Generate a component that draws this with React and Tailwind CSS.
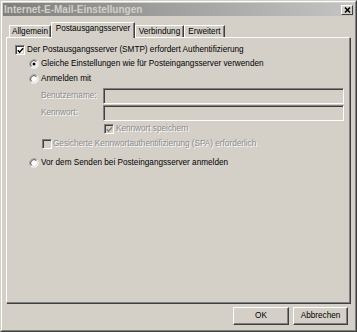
import React from "react";

const DIS = "text-[#8a8a8a] [text-shadow:1px_1px_0_#ffffff]";

function Check({ checked, disabled }) {
  return (
    <span
      className={`relative flex items-center justify-center w-[10px] h-[10px] shrink-0 border border-t-[#808080] border-l-[#808080] border-r-white border-b-white shadow-[inset_1px_1px_0_#404040,inset_-1px_-1px_0_#d4d0c8] ${
        disabled ? "bg-[#d4d0c8]" : "bg-white"
      }`}
    >
      {checked && (
        <svg width="7" height="7" viewBox="0 0 7 7">
          <path
            d="M0.8 3.2 L2.6 5.2 L6.2 1.2"
            fill="none"
            stroke={disabled ? "#808080" : "#000"}
            strokeWidth="1.5"
          />
        </svg>
      )}
    </span>
  );
}

function Radio({ checked }) {
  return (
    <svg width="10" height="10" viewBox="0 0 12 12" className="shrink-0">
      <circle cx="6" cy="6" r="5" fill="#fff" />
      <path d="M2.46 9.54 A5 5 0 0 1 9.54 2.46" fill="none" stroke="#808080" strokeWidth="1" />
      <path d="M9.54 2.46 A5 5 0 0 1 2.46 9.54" fill="none" stroke="#ffffff" strokeWidth="1" />
      <path d="M3.17 8.83 A4 4 0 0 1 8.83 3.17" fill="none" stroke="#404040" strokeWidth="1" />
      <path d="M8.83 3.17 A4 4 0 0 1 3.17 8.83" fill="none" stroke="#d4d0c8" strokeWidth="1" />
      {checked && <circle cx="6" cy="6" r="1.8" fill="#000" />}
    </svg>
  );
}

function Tab({ label, w, selected }) {
  if (selected) {
    return (
      <div
        className={`${w} h-[16px] mb-[-1px] relative z-10 bg-[#d4d0c8] border-l border-t border-l-white border-t-white border-r border-r-[#404040] shadow-[inset_-1px_0_0_#808080] flex justify-center leading-[12px] shrink-0`}
      >
        {label}
      </div>
    );
  }
  return (
    <div
      className={`${w} h-[12px] border-l border-t border-l-white border-t-white border-r border-r-[#404040] shadow-[inset_-1px_0_0_#808080] flex justify-center leading-[11px] shrink-0`}
    >
      {label}
    </div>
  );
}

function Field() {
  return (
    <div className="w-[241px] h-[16px] bg-[#d4d0c8] border border-t-[#808080] border-l-[#808080] border-r-white border-b-white shadow-[inset_1px_1px_0_#404040,inset_-1px_-1px_0_#d4d0c8]" />
  );
}

function Button({ children, w }) {
  return (
    <div
      className={`${w} h-[18px] flex items-center justify-center border border-t-white border-l-white border-r-[#404040] border-b-[#404040] shadow-[inset_-1px_-1px_0_#808080]`}
    >
      {children}
    </div>
  );
}

export default function App() {
  return (
    <div className="w-[357px] h-[332px] bg-[#d4d0c8] border border-t-[#d4d0c8] border-l-[#d4d0c8] border-r-[#404040] border-b-[#404040] font-['Liberation_Sans',Arial,sans-serif] text-[8.2px] text-black leading-none">
      <div className="h-full border border-t-white border-l-white border-r-[#808080] border-b-[#808080] p-px flex flex-col">
        {/* Title bar */}
        <div className="h-[13px] flex items-center justify-between bg-gradient-to-r from-[#808080] to-[#c4c4c4] pl-[1px] shrink-0">
          <span className="text-[10px] font-bold text-[#d4d0c8] leading-none">
            Internet-E-Mail-Einstellungen
          </span>
          <div className="w-[12px] h-[10px] mr-[1px] bg-[#d4d0c8] border border-t-white border-l-white border-r-[#404040] border-b-[#404040] flex items-center justify-center">
            <svg width="7" height="6" viewBox="0 0 7 6">
              <path d="M1 0.5 L6 5.5 M6 0.5 L1 5.5" stroke="#000" strokeWidth="1.5" />
            </svg>
          </div>
        </div>

        {/* Tabs */}
        <div className="mt-[6px] ml-[6px] h-[15px] flex items-end shrink-0">
          <Tab label="Allgemein" w="w-[42px]" />
          <Tab label="Postausgangsserver" w="w-[84px]" selected />
          <Tab label="Verbindung" w="w-[49px]" />
          <Tab label="Erweitert" w="w-[41px]" />
        </div>

        {/* Panel */}
        <div className="ml-[3px] w-[344px] h-[266px] shrink-0 border border-t-white border-l-white border-r-[#808080] border-b-[#808080] shadow-[1px_1px_0_#404040] flex flex-col">
          <div className="mt-[5px] h-[14px] pl-[8px] flex items-center">
            <Check checked />
            <span className="ml-[2px]">Der Postausgangsserver (SMTP) erfordert Authentifizierung</span>
          </div>
          <div className="h-[14px] pl-[22px] flex items-center">
            <Radio checked />
            <span className="ml-[2px]">Gleiche Einstellungen wie für Posteingangsserver verwenden</span>
          </div>
          <div className="mt-[1px] h-[14px] pl-[22px] flex items-center">
            <Radio />
            <span className="ml-[2px]">Anmelden mit</span>
          </div>
          <div className="mt-[2px] h-[16px] pl-[34px] flex items-center">
            <span className={`w-[62px] ${DIS}`}>Benutzername:</span>
            <Field />
          </div>
          <div className="mt-[1px] h-[16px] pl-[34px] flex items-center">
            <span className={`w-[62px] ${DIS}`}>Kennwort:</span>
            <Field />
          </div>
          <div className="mt-[1px] h-[14px] pl-[97px] flex items-center">
            <Check checked disabled />
            <span className={`ml-[2px] ${DIS}`}>Kennwort speichern</span>
          </div>
          <div className="mt-[1px] h-[14px] pl-[35px] flex items-center">
            <Check disabled />
            <span className={`ml-[1px] ${DIS}`}>
              Gesicherte Kennwortauthentifizierung (SPA) erforderlich
            </span>
          </div>
          <div className="mt-[5px] h-[14px] pl-[22px] flex items-center">
            <Radio />
            <span className="ml-[2px]">Vor dem Senden bei Posteingangsserver anmelden</span>
          </div>
        </div>

        {/* Buttons */}
        <div className="mt-[4px] pr-[6px] flex justify-end gap-[4px]">
          <Button w="w-[56px]">OK</Button>
          <Button w="w-[55px]">Abbrechen</Button>
        </div>
      </div>
    </div>
  );
}
